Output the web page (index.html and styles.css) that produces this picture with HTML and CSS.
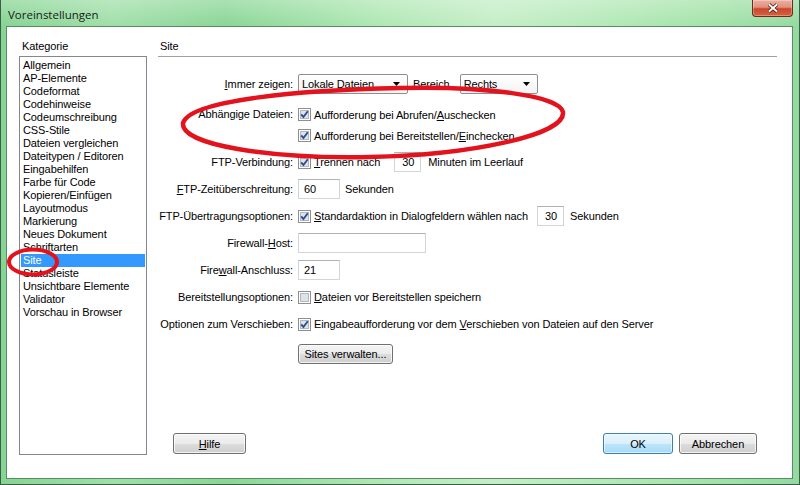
FILE: index.html
```html
<!DOCTYPE html>
<html lang="de">
<head>
<meta charset="utf-8">
<title>Voreinstellungen</title>
<link rel="stylesheet" href="styles.css">
</head>
<body>
<div class="window">
  <div class="titlebar">
    <span class="title">Voreinstellungen</span>
    <span class="close"><svg width="12" height="10" viewBox="0 0 12 10"><path d="M2 1.5 10 8.5M10 1.5 2 8.5" stroke="#4a1208" stroke-width="3.6" fill="none"/><path d="M2 1.5 10 8.5M10 1.5 2 8.5" stroke="#fff" stroke-width="2" fill="none"/></svg></span>
  </div>
  <div class="client">
    <div class="side">
      <div class="side-label">Kategorie</div>
      <ul class="list">
        <li>Allgemein</li>
        <li>AP-Elemente</li>
        <li>Codeformat</li>
        <li>Codehinweise</li>
        <li>Codeumschreibung</li>
        <li>CSS-Stile</li>
        <li>Dateien vergleichen</li>
        <li>Dateitypen / Editoren</li>
        <li>Eingabehilfen</li>
        <li>Farbe für Code</li>
        <li>Kopieren/Einfügen</li>
        <li>Layoutmodus</li>
        <li>Markierung</li>
        <li>Neues Dokument</li>
        <li>Schriftarten</li>
        <li class="sel">Site</li>
        <li>Statusleiste</li>
        <li>Unsichtbare Elemente</li>
        <li>Validator</li>
        <li>Vorschau in Browser</li>
      </ul>
    </div>
    <div class="main">
      <div class="section-title">Site</div>
      <div class="form">
        <div class="row">
          <span class="lbl"><span><u>I</u>mmer zeigen:</span></span>
          <span class="select w-local">Lokale Dateien<svg class="arrow" width="7" height="4" viewBox="0 0 7 4"><path d="M0 0h7L3.5 4z"/></svg></span>
          <span class="txt ml-5">Bereic<u>h</u></span>
          <span class="select w-side ml-10">Rechts<svg class="arrow" width="7" height="4" viewBox="0 0 7 4"><path d="M0 0h7L3.5 4z"/></svg></span>
        </div>
        <div class="row dep">
          <span class="lbl"><span>Abhängige Dateien:</span></span>
          <div class="checks">
            <div class="check"><svg class="cb" width="13" height="13" viewBox="0 0 13 13"><rect x=".5" y=".5" width="12" height="12" fill="#fff" stroke="#8e8f8f"/><rect x="2.5" y="2.5" width="8" height="8" fill="#dfe3e8" stroke="#b3b8be"/><path d="M3.2 6.4 5.4 9 9.8 3.2" fill="none" stroke="#2d4d96" stroke-width="1.9"/></svg><span>Aufforderung bei Abrufen/<u>A</u>uschecken</span></div>
            <div class="check"><svg class="cb" width="13" height="13" viewBox="0 0 13 13"><rect x=".5" y=".5" width="12" height="12" fill="#fff" stroke="#8e8f8f"/><rect x="2.5" y="2.5" width="8" height="8" fill="#dfe3e8" stroke="#b3b8be"/><path d="M3.2 6.4 5.4 9 9.8 3.2" fill="none" stroke="#2d4d96" stroke-width="1.9"/></svg><span>Aufforderung bei Bereitstellen/<u>E</u>inchecken</span></div>
          </div>
        </div>
        <div class="row">
          <span class="lbl"><span>FTP-Verbindung:</span></span>
          <svg class="cb" width="13" height="13" viewBox="0 0 13 13"><rect x=".5" y=".5" width="12" height="12" fill="#fff" stroke="#8e8f8f"/><rect x="2.5" y="2.5" width="8" height="8" fill="#dfe3e8" stroke="#b3b8be"/><path d="M3.2 6.4 5.4 9 9.8 3.2" fill="none" stroke="#2d4d96" stroke-width="1.9"/></svg>
          <span class="txt"><u>T</u>rennen nach</span>
          <span class="input w-num ml-14">30</span>
          <span class="txt ml-7">Minuten im Leerlauf</span>
        </div>
        <div class="row">
          <span class="lbl"><span><u>F</u>TP-Zeitüberschreitung:</span></span>
          <span class="input w-short">60</span>
          <span class="txt ml-5">Sekunden</span>
        </div>
        <div class="row">
          <span class="lbl"><span>FTP-Übertragungsoptionen:</span></span>
          <svg class="cb" width="13" height="13" viewBox="0 0 13 13"><rect x=".5" y=".5" width="12" height="12" fill="#fff" stroke="#8e8f8f"/><rect x="2.5" y="2.5" width="8" height="8" fill="#dfe3e8" stroke="#b3b8be"/><path d="M3.2 6.4 5.4 9 9.8 3.2" fill="none" stroke="#2d4d96" stroke-width="1.9"/></svg>
          <span class="txt"><u>S</u>tandardaktion in Dialogfeldern wählen nach</span>
          <span class="input w-num ml-9">30</span>
          <span class="txt ml-6">Sekunden</span>
        </div>
        <div class="row">
          <span class="lbl"><span>Firewall-<u>H</u>ost:</span></span>
          <span class="input w-host"></span>
        </div>
        <div class="row">
          <span class="lbl"><span>Fire<u>w</u>all-Anschluss:</span></span>
          <span class="input w-short">21</span>
        </div>
        <div class="row">
          <span class="lbl"><span>Bereitstellungsoptionen:</span></span>
          <svg class="cb" width="13" height="13" viewBox="0 0 13 13"><rect x=".5" y=".5" width="12" height="12" fill="#fff" stroke="#8e8f8f"/><rect x="2.5" y="2.5" width="8" height="8" fill="#dfe3e8" stroke="#b3b8be"/></svg>
          <span class="txt"><u>D</u>ateien vor Bereitstellen speichern</span>
        </div>
        <div class="row">
          <span class="lbl"><span>Optionen zum Verschieben:</span></span>
          <svg class="cb" width="13" height="13" viewBox="0 0 13 13"><rect x=".5" y=".5" width="12" height="12" fill="#fff" stroke="#8e8f8f"/><rect x="2.5" y="2.5" width="8" height="8" fill="#dfe3e8" stroke="#b3b8be"/><path d="M3.2 6.4 5.4 9 9.8 3.2" fill="none" stroke="#2d4d96" stroke-width="1.9"/></svg>
          <span class="txt">Eingabeaufforderung vor dem <u>V</u>erschieben von Dateien auf den Server</span>
        </div>
        <div class="row btnrow">
          <span class="lbl"></span>
          <span class="btn w-sites">Sites verwalten...</span>
        </div>
      </div>
      <div class="buttons">
        <span class="btn w-help"><span><u>H</u>ilfe</span></span>
        <span class="spacer"></span>
        <span class="btn default w-ok">OK</span>
        <span class="btn w-cancel">Abbrechen</span>
      </div>
    </div>
  </div>
  <svg class="marks" width="800" height="485" viewBox="0 0 800 485">
    <path d="M183 123C190 100 300 90 400 88C480 86 560 95 563 112C566 135 470 155 370 157C270 159 180 145 183 123Z" fill="none" stroke="#e3131e" stroke-width="4.5"/>
    <ellipse cx="33" cy="262" rx="24" ry="12.5" fill="none" stroke="#e3131e" stroke-width="4"/>
  </svg>
</div>
</body>
</html>
```

FILE: styles.css
```css
* { box-sizing: border-box; }
html, body { margin: 0; padding: 0; }
body {
  width: 800px;
  height: 485px;
  overflow: hidden;
  font-family: "Liberation Sans", Arial, sans-serif;
  font-size: 11px;
  letter-spacing: -0.1px;
  color: #000;
  background: #8fd89b;
}
.window {
  position: relative;
  width: 800px;
  height: 485px;
  display: flex;
  flex-direction: column;
  padding: 0 6px 5px 5px;
  border: 1px solid #3c5e46;
  border-top: 0;
  background:
    linear-gradient(to bottom, rgba(255,255,255,0.28), rgba(255,255,255,0) 26px),
    linear-gradient(to right, #86d493 0%, #a0dfa8 14%, #8ad696 28%, #b0e8b4 48%, #c4eec6 62%, #b6eaba 74%, #a4e3a9 88%, #94daa0 100%);
}
.titlebar {
  height: 26px;
  flex: none;
  display: flex;
  justify-content: space-between;
  align-items: flex-start;
}
.title {
  font-family: "Open Sans", "Liberation Sans", sans-serif;
  font-size: 11.5px;
  letter-spacing: 0;
  line-height: 16px;
  margin: 7px 0 0 2px;
  color: #1a1a1a;
}
.close {
  width: 41px;
  height: 17px;
  display: flex;
  align-items: center;
  justify-content: center;
  border: 1px solid #6a2a1e;
  border-top: 0;
  border-radius: 0 0 4px 4px;
  background: linear-gradient(to bottom, #eeb0a0 0%, #e0917d 45%, #c9472c 55%, #d9603f 100%);
  box-shadow: inset 0 0 0 1px rgba(255,255,255,0.3);
}
.client {
  flex: 1;
  display: flex;
  background: #fff;
  border: 1px solid #5b8a65;
  padding: 13px 0 23px 12px;
}
.side {
  width: 128px;
  flex: none;
  display: flex;
  flex-direction: column;
  margin-right: 11px;
}
.side-label {
  line-height: 13px;
  padding-left: 3px;
  margin-bottom: 3px;
}
.list {
  flex: 1;
  margin: 0;
  padding: 2px 1px;
  list-style: none;
  border: 1px solid #828790;
}
.list li {
  height: 13px;
  line-height: 13px;
  padding-left: 2px;
  white-space: nowrap;
}
.list li.sel {
  background: #3399ff;
  color: #fff;
}
.main {
  width: 619px;
  flex: none;
  display: flex;
  flex-direction: column;
}
.section-title {
  line-height: 13px;
  padding: 0 0 3px 2px;
  border-bottom: 1px solid #a0a0a0;
}
.form {
  padding-top: 17px;
  margin-left: -4px;
}
.row {
  display: flex;
  align-items: center;
  height: 20px;
  margin-top: 7px;
  white-space: nowrap;
}
.row:first-child { margin-top: 0; }
.row.dep {
  height: 42px;
  align-items: flex-start;
  margin-top: 10px;
}
.dep + .row { margin-top: 6px; }
.row.btnrow { margin-top: 10px; }
.lbl {
  width: 139px;
  flex: none;
  display: flex;
  justify-content: flex-end;
  margin-right: 5px;
  white-space: nowrap;
}
.dep .lbl { line-height: 21px; }
.checks {
  display: flex;
  flex-direction: column;
}
.check {
  display: flex;
  align-items: center;
  height: 21px;
}
.cb {
  flex: none;
  margin-right: 3px;
}
.txt { white-space: nowrap; }
.select {
  height: 20px;
  display: flex;
  align-items: center;
  justify-content: space-between;
  padding: 0 7px 0 3px;
  border: 1px solid #8d8e8f;
  border-radius: 2px;
  background: linear-gradient(to bottom, #ffffff, #f4f4f4);
}
.arrow { fill: #000; }
.input {
  height: 20px;
  display: flex;
  align-items: center;
  padding-left: 5px;
  border: 1px solid #d2d5da;
  border-top-color: #aeb1b7;
  background: #fff;
}
.w-local { width: 110px; }
.w-side { width: 78px; }
.w-num { width: 27px; padding-left: 7px; }
.w-short { width: 42px; }
.w-host { width: 128px; }
.ml-5 { margin-left: 5px; }
.ml-6 { margin-left: 6px; }
.ml-7 { margin-left: 7px; }
.ml-9 { margin-left: 9px; }
.ml-10 { margin-left: 10px; }
.ml-14 { margin-left: 14px; }
.btn {
  height: 21px;
  display: flex;
  align-items: center;
  justify-content: center;
  border: 1px solid #707070;
  border-radius: 3px;
  background: linear-gradient(to bottom, #f4f4f4 0%, #ebebeb 50%, #dddddd 50%, #cfcfcf 100%);
  box-shadow: inset 0 0 0 1px rgba(255,255,255,0.75);
  white-space: nowrap;
}
.btn.default {
  border-color: #3c7fb1;
  background: linear-gradient(to bottom, #eaf6fd 0%, #d9f0fc 50%, #bee6fd 50%, #a7d9f5 100%);
  box-shadow: inset 0 0 0 1px rgba(255,255,255,0.6);
}
.w-sites { width: 95px; height: 20px; }
.w-help { width: 73px; }
.w-ok { width: 70px; }
.w-cancel { width: 78px; margin-left: 6px; }
.buttons {
  margin-top: auto;
  display: flex;
  padding: 0 20px 1px 15px;
}
.spacer { flex: 1; }
.marks {
  position: absolute;
  left: -1px;
  top: 0;
  pointer-events: none;
}
```
